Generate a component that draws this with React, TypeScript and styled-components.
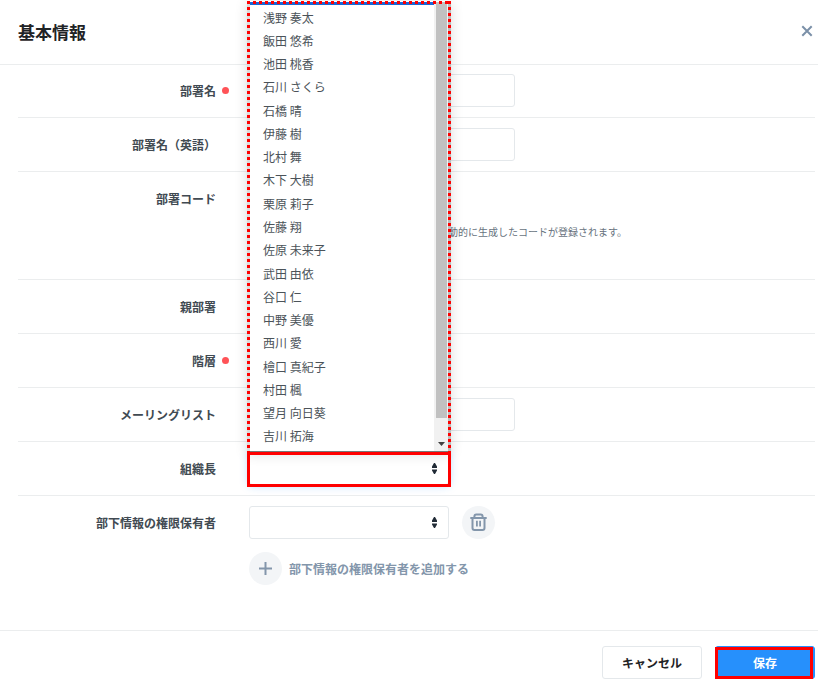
import React from "react";
import styled, { createGlobalStyle } from "styled-components";

const GlobalStyle = createGlobalStyle`
  *, *::before, *::after { box-sizing: border-box; }
  body {
    margin: 0;
    background: #fff;
    color: #414a52;
    font-family: "Noto Sans CJK JP", "Noto Sans", sans-serif;
    font-size: 12px;
  }
  button, input, select { font: inherit; color: inherit; margin: 0; }
`;

const Page = styled.main`
  display: flex;
  flex-direction: column;
  width: 100%;
`;

const Header = styled.header`
  display: flex;
  align-items: center;
  justify-content: space-between;
  height: 65px;
  padding: 0 2px 0 18px;
  border-bottom: 1px solid #ebedee;
`;

const Title = styled.h1`
  margin: 0;
  font-size: 17px;
  line-height: 24px;
  font-weight: 700;
  color: #1f2326;
`;

const CloseButton = styled.button`
  display: grid;
  place-items: center;
  width: 18px;
  height: 18px;
  margin-bottom: 2px;
  padding: 0;
  border: 0;
  background: none;
  color: #7b90a8;
  cursor: pointer;
`;

const Form = styled.form`
  display: flex;
  flex-direction: column;
`;

const Fields = styled.div`
  display: flex;
  flex-direction: column;
  padding: 0 3px 35px 18px;
`;

const Row = styled.div<{ $tall?: boolean }>`
  display: grid;
  grid-template-columns: 198px 33px minmax(0, 1fr);
  align-items: start;
  min-height: ${(p) => (p.$tall ? 108 : 54)}px;
  padding: 10px 0;
  border-bottom: 1px solid #ebedee;

  &:first-child { padding-top: 9px; min-height: 53px; }
  &:last-child { border-bottom: 0; }
`;

const Label = styled.label`
  font-weight: 700;
  line-height: 33px;
  text-align: right;
  white-space: nowrap;
`;

const Marker = styled.span`
  display: flex;
  align-items: center;
  height: 33px;
  padding-left: 6px;
`;

const RequiredDot = styled.span`
  width: 7px;
  height: 7px;
  border-radius: 50%;
  background: #ff5357;
`;

const Controls = styled.div`
  display: flex;
  flex-direction: column;
  gap: 13px;
`;

const Line = styled.div`
  display: flex;
  align-items: center;
  gap: 13px;
`;

const TextInput = styled.input`
  width: 100%;
  max-width: 266px;
  height: 33px;
  padding: 0 12px;
  border: 1px solid #e4e8eb;
  border-radius: 3px;
  background: #fff;
  outline: none;
`;

const Hint = styled.p`
  margin: 0;
  padding: 33px 0 0 199px;
  font-size: 10px;
  line-height: 33px;
  color: #68737e;
`;

const SelectField = styled.div<{ $active?: boolean }>`
  position: relative;
  width: 200px;
  height: 33px;
  border-radius: 3px;
  box-shadow: ${(p) => (p.$active ? "0 0 10px rgba(38, 144, 252, 0.4)" : "none")};
`;

const Select = styled.select`
  appearance: none;
  display: block;
  width: 100%;
  height: 100%;
  padding: 0 24px 0 12px;
  border: 1px solid #e4e8eb;
  border-radius: 3px;
  background: #fff;
  outline: none;
`;

const Arrows = styled.svg`
  position: absolute;
  right: 12px;
  top: 11px;
  pointer-events: none;
  fill: #212b36;
`;

const Highlight = styled.span`
  position: absolute;
  inset: 0 -2px -2px;
  z-index: 3;
  border: 3px solid #f00;
  pointer-events: none;
`;

const Popup = styled.div`
  position: absolute;
  z-index: 2;
  left: -2px;
  right: -2px;
  bottom: 100%;
  height: 451px;
  padding: 1px 3px 0 3px;
  background: #fff;
  box-shadow: 0 2px 12px rgba(0, 0, 0, 0.14);

  &::after {
    content: "";
    position: absolute;
    inset: 0;
    pointer-events: none;
    background:
      repeating-linear-gradient(90deg, #f00 0 3px, transparent 3px 6px) top / 100% 3px no-repeat,
      repeating-linear-gradient(#f00 0 3px, #dcdcdc 3px 6px) left / 3px 100% no-repeat,
      repeating-linear-gradient(#f00 0 3px, #bcbcbc 3px 6px) right / 3px 100% no-repeat;
  }
`;

const PopupBody = styled.div`
  display: flex;
  height: 100%;
  border-bottom: 1px solid #777;
`;

const Options = styled.ul`
  display: flex;
  flex: 1;
  flex-direction: column;
  margin: 0;
  padding: 1px 0 3px;
  border-top: 3px solid #1a66d6;
  list-style: none;
`;

const Option = styled.li`
  display: flex;
  flex: 1;
  align-items: center;
  padding-left: 13px;
  line-height: 22px;
  color: #4b5359;
`;

const ScrollTrack = styled.div`
  display: flex;
  flex-direction: column;
  align-items: center;
  justify-content: space-between;
  width: 14px;
  padding-bottom: 5px;
  background: #f1f1f1;
`;

const ScrollThumb = styled.div`
  width: 11px;
  height: 416px;
  background: #c1c1c1;
`;

const RoundIcon = styled.span`
  display: grid;
  place-items: center;
  flex: none;
  width: 33px;
  height: 33px;
  border-radius: 50%;
  background: #f3f5f7;
  color: #8396ab;
`;

const IconButton = styled.button`
  display: flex;
  align-items: center;
  gap: 7px;
  padding: 0;
  border: 0;
  background: none;
  color: #8396ab;
  font-weight: 700;
  cursor: pointer;
`;

const Footer = styled.footer`
  display: flex;
  justify-content: flex-end;
  gap: 13px;
  padding: 15px 3px 4px;
  border-top: 1px solid #ebedee;
`;

const Button = styled.button<{ $primary?: boolean }>`
  position: relative;
  width: 100px;
  height: 33px;
  padding: 0;
  border: 1px solid ${(p) => (p.$primary ? "#2690fc" : "#e4e8eb")};
  border-radius: 3px;
  background: ${(p) => (p.$primary ? "#2690fc" : "#fff")};
  color: ${(p) => (p.$primary ? "#fff" : "#1f2326")};
  font-weight: 700;
  cursor: pointer;
`;

const ButtonHighlight = styled.span`
  position: absolute;
  inset: 0 1px -1px -1px;
  border: 3px solid #f00;
  pointer-events: none;
`;

const people = [
  "浅野 奏太", "飯田 悠希", "池田 桃香", "石川 さくら", "石橋 晴", "伊藤 樹", "北村 舞",
  "木下 大樹", "栗原 莉子", "佐藤 翔", "佐原 未来子", "武田 由依", "谷口 仁", "中野 美優",
  "西川 愛", "檜口 真紀子", "村田 楓", "望月 向日葵", "吉川 拓海",
];

const UpDown = () => (
  <Arrows width="5" height="11" viewBox="0 0 5 11" aria-hidden="true">
    <path d="M2 0h1l2 3.5V5H0V3.5zM2 11h1l2-3.5V6.4H0v1.1z" />
  </Arrows>
);

type FieldRowProps = {
  label: string;
  htmlFor?: string;
  required?: boolean;
  tall?: boolean;
  children?: React.ReactNode;
};

const FieldRow = ({ label, htmlFor, required, tall, children }: FieldRowProps) => (
  <Row $tall={tall}>
    <Label htmlFor={htmlFor} as={htmlFor ? "label" : "span"}>{label}</Label>
    <Marker>{required && <RequiredDot />}</Marker>
    <Controls>{children}</Controls>
  </Row>
);

export default function App() {
  return (
    <Page>
      <GlobalStyle />
      <Header>
        <Title>基本情報</Title>
        <CloseButton type="button" aria-label="閉じる">
          <svg width="12" height="12" viewBox="0 0 12 12" fill="none" stroke="currentColor" strokeWidth="2">
            <path d="M1.3 1.3l9.4 9.4M10.7 1.3l-9.4 9.4" />
          </svg>
        </CloseButton>
      </Header>
      <Form onSubmit={(e) => e.preventDefault()}>
        <Fields>
          <FieldRow label="部署名" htmlFor="name" required>
            <TextInput id="name" type="text" />
          </FieldRow>
          <FieldRow label="部署名（英語）" htmlFor="name-en">
            <TextInput id="name-en" type="text" />
          </FieldRow>
          <FieldRow label="部署コード" tall>
            <Hint>動的に生成したコードが登録されます。</Hint>
          </FieldRow>
          <FieldRow label="親部署" />
          <FieldRow label="階層" required />
          <FieldRow label="メーリングリスト" htmlFor="mailing">
            <TextInput id="mailing" type="text" />
          </FieldRow>
          <FieldRow label="組織長" htmlFor="leader">
            <SelectField $active>
              <Select id="leader"><option /></Select>
              <UpDown />
              <Popup>
                <PopupBody>
                  <Options role="listbox" aria-label="組織長">
                    {people.map((name) => (
                      <Option key={name} role="option">{name}</Option>
                    ))}
                  </Options>
                  <ScrollTrack>
                    <ScrollThumb />
                    <svg width="7" height="4" viewBox="0 0 7 4" fill="#404040" aria-hidden="true">
                      <path d="M0 0h7L3.5 4z" />
                    </svg>
                  </ScrollTrack>
                </PopupBody>
              </Popup>
              <Highlight />
            </SelectField>
          </FieldRow>
          <FieldRow label="部下情報の権限保有者" htmlFor="holder">
            <Line>
              <SelectField>
                <Select id="holder"><option /></Select>
                <UpDown />
              </SelectField>
              <IconButton type="button" aria-label="削除">
                <RoundIcon>
                  <svg width="17" height="19" viewBox="0 0 17 19" fill="none" stroke="currentColor" strokeWidth="2">
                    <path d="M.3 5h16.4M4.4 4.8V3.4Q4.4 1.5 6.3 1.5h4.4q1.9 0 1.9 1.9v1.4M2.5 5v10q0 2 2 2h8q2 0 2-2V5" />
                    <path d="M6.9 7.8v5.8M10.1 7.8v5.8" strokeWidth="1.8" />
                  </svg>
                </RoundIcon>
              </IconButton>
            </Line>
            <Line>
              <IconButton type="button">
                <RoundIcon>
                  <svg width="13" height="13" viewBox="0 0 13 13" fill="none" stroke="currentColor" strokeWidth="2">
                    <path d="M6.5 0v13M0 6.5h13" />
                  </svg>
                </RoundIcon>
                部下情報の権限保有者を追加する
              </IconButton>
            </Line>
          </FieldRow>
        </Fields>
        <Footer>
          <Button type="button">キャンセル</Button>
          <Button type="submit" $primary>
            保存
            <ButtonHighlight />
          </Button>
        </Footer>
      </Form>
    </Page>
  );
}
